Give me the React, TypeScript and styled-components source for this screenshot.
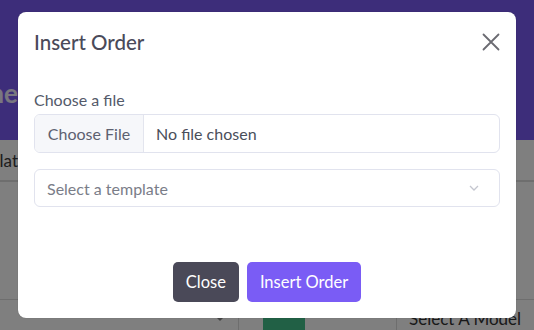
import React from "react";
import styled, { createGlobalStyle } from "styled-components";

const Global = createGlobalStyle`
  html, body { margin: 0; padding: 0; }
  body {
    width: 534px;
    height: 330px;
    overflow: hidden;
    font-family: "Lato", "Noto Sans", sans-serif;
    background: #ffffff;
  }
  * { box-sizing: border-box; }
`;

const Page = styled.div`
  position: relative;
  width: 534px;
  height: 330px;
  overflow: hidden;
  background: #fefefe;
  display: flex;
  flex-direction: column;
`;

const Header = styled.header`
  height: 140px;
  background: #7b5bf4;
  display: flex;
  align-items: center;
  padding-top: 46px;
`;

const Clip = styled.div`
  width: 18px;
  overflow: hidden;
  display: flex;
  justify-content: flex-end;
  white-space: nowrap;
`;

const PageTitle = styled.span`
  font-size: 26px;
  font-weight: 700;
  color: #f2efff;
`;

const TabRow = styled.div`
  height: 42px;
  border-bottom: 2px solid #dcdcdc;
  display: flex;
  align-items: center;
`;

const TabText = styled.span`
  font-size: 17px;
  color: #3a3a3a;
`;

const Spacer = styled.div`
  flex: 1;
  border-bottom: 1px solid #dcdcdc;
`;

const BottomRow = styled.div`
  height: 30px;
  display: grid;
  grid-template-columns: 238px 158px 1fr;
`;

const Cell = styled.div<{ $border?: boolean }>`
  display: flex;
  align-items: flex-start;
  padding-top: 8px;
  border-left: ${(p) => (p.$border ? "1px solid #dcdcdc" : "none")};
`;

const Caret = styled.div`
  margin-left: 213px;
  margin-top: 6px;
  width: 0;
  height: 0;
  border-left: 7px solid transparent;
  border-right: 7px solid transparent;
  border-top: 7px solid #888;
`;

const GreenBtn = styled.div`
  margin-left: 24px;
  margin-top: -10px;
  width: 42px;
  height: 40px;
  background: #43c08a;
  color: #fff;
  font-size: 22px;
  display: flex;
  justify-content: center;
  align-items: flex-start;
  line-height: 20px;
`;

const ModelText = styled.span`
  margin-left: 12px;
  margin-top: 0px;
  font-size: 17px;
  color: #333;
`;

const Backdrop = styled.div`
  position: absolute;
  inset: 0;
  background: rgba(0, 0, 0, 0.5);
  display: flex;
  justify-content: center;
  align-items: flex-start;
  padding-top: 12px;
`;

const Modal = styled.div`
  width: 498px;
  height: 306px;
  background: #fff;
  border-radius: 8px;
  display: flex;
  flex-direction: column;
  box-shadow: 0 0 1px rgba(0, 0, 0, 0.3);
`;

const ModalHeader = styled.div`
  display: flex;
  align-items: center;
  justify-content: space-between;
  padding: 15px 16px 15px 16px;
`;

const ModalTitle = styled.h5`
  margin: 0;
  font-size: 20.5px;
  line-height: 30px;
  font-weight: 500;
  color: #4a4a5a;
`;

const CloseX = styled.button`
  border: 0;
  background: transparent;
  padding: 0;
  width: 18px;
  height: 18px;
  display: flex;
  cursor: pointer;
`;

const ModalBody = styled.div`
  flex: 1;
  padding: 16px 16px 0 16px;
  display: flex;
  flex-direction: column;
`;

const Label = styled.label`
  font-size: 16px;
  line-height: 24px;
  color: #545a6a;
  margin-bottom: 2px;
`;

const FileBox = styled.div`
  height: 39px;
  border: 1px solid #e1e3ee;
  border-radius: 6px;
  display: flex;
  overflow: hidden;
  margin-bottom: 16px;
`;

const FileBtn = styled.div`
  width: 109px;
  background: #f6f7fa;
  border-right: 1px solid #e3e5ee;
  display: flex;
  align-items: center;
  justify-content: center;
  font-size: 16px;
  color: #5d6170;
`;

const FileName = styled.div`
  display: flex;
  align-items: center;
  padding-left: 12px;
  font-size: 16px;
  color: #4a4e5a;
`;

const Select = styled.div`
  height: 38px;
  border: 1px solid #e1e3ee;
  border-radius: 6px;
  display: flex;
  align-items: center;
  justify-content: space-between;
  padding: 0 20px 0 12px;
`;

const SelectText = styled.span`
  font-size: 16px;
  color: #7a7d88;
`;

const ModalFooter = styled.div`
  display: flex;
  justify-content: center;
  gap: 8px;
  padding: 16px;
`;

const Btn = styled.button<{ $variant: "dark" | "primary" }>`
  height: 40px;
  border: 0;
  border-radius: 5px;
  padding: 0 13px;
  font-family: inherit;
  font-size: 16.5px;
  color: #fff;
  background: ${(p) => (p.$variant === "dark" ? "#4a4958" : "#7a5cf5")};
`;

export default function App() {
  return (
    <>
      <Global />
      <Page>
        <Header>
          <Clip>
            <PageTitle>Home</PageTitle>
          </Clip>
        </Header>
        <TabRow>
          <Clip>
            <TabText>Templat</TabText>
          </Clip>
        </TabRow>
        <Spacer />
        <BottomRow>
          <Cell>
            <Caret />
          </Cell>
          <Cell $border>
            <GreenBtn>+</GreenBtn>
          </Cell>
          <Cell $border>
            <ModelText>Select A Model</ModelText>
          </Cell>
        </BottomRow>
        <Backdrop>
          <Modal>
            <ModalHeader>
              <ModalTitle>Insert Order</ModalTitle>
              <CloseX aria-label="Close">
                <svg width="18" height="18" viewBox="0 0 18 18">
                  <path d="M1.5 1.5 L16.5 16.5 M16.5 1.5 L1.5 16.5" stroke="#6b6b72" strokeWidth="1.8" strokeLinecap="round" />
                </svg>
              </CloseX>
            </ModalHeader>
            <ModalBody>
              <Label>Choose a file</Label>
              <FileBox>
                <FileBtn>Choose File</FileBtn>
                <FileName>No file chosen</FileName>
              </FileBox>
              <Select>
                <SelectText>Select a template</SelectText>
                <svg width="10" height="6" viewBox="0 0 10 6">
                  <path d="M1 1 L5 5 L9 1" stroke="#c4c6cf" strokeWidth="1.3" fill="none" />
                </svg>
              </Select>
            </ModalBody>
            <ModalFooter>
              <Btn $variant="dark">Close</Btn>
              <Btn $variant="primary">Insert Order</Btn>
            </ModalFooter>
          </Modal>
        </Backdrop>
      </Page>
    </>
  );
}
